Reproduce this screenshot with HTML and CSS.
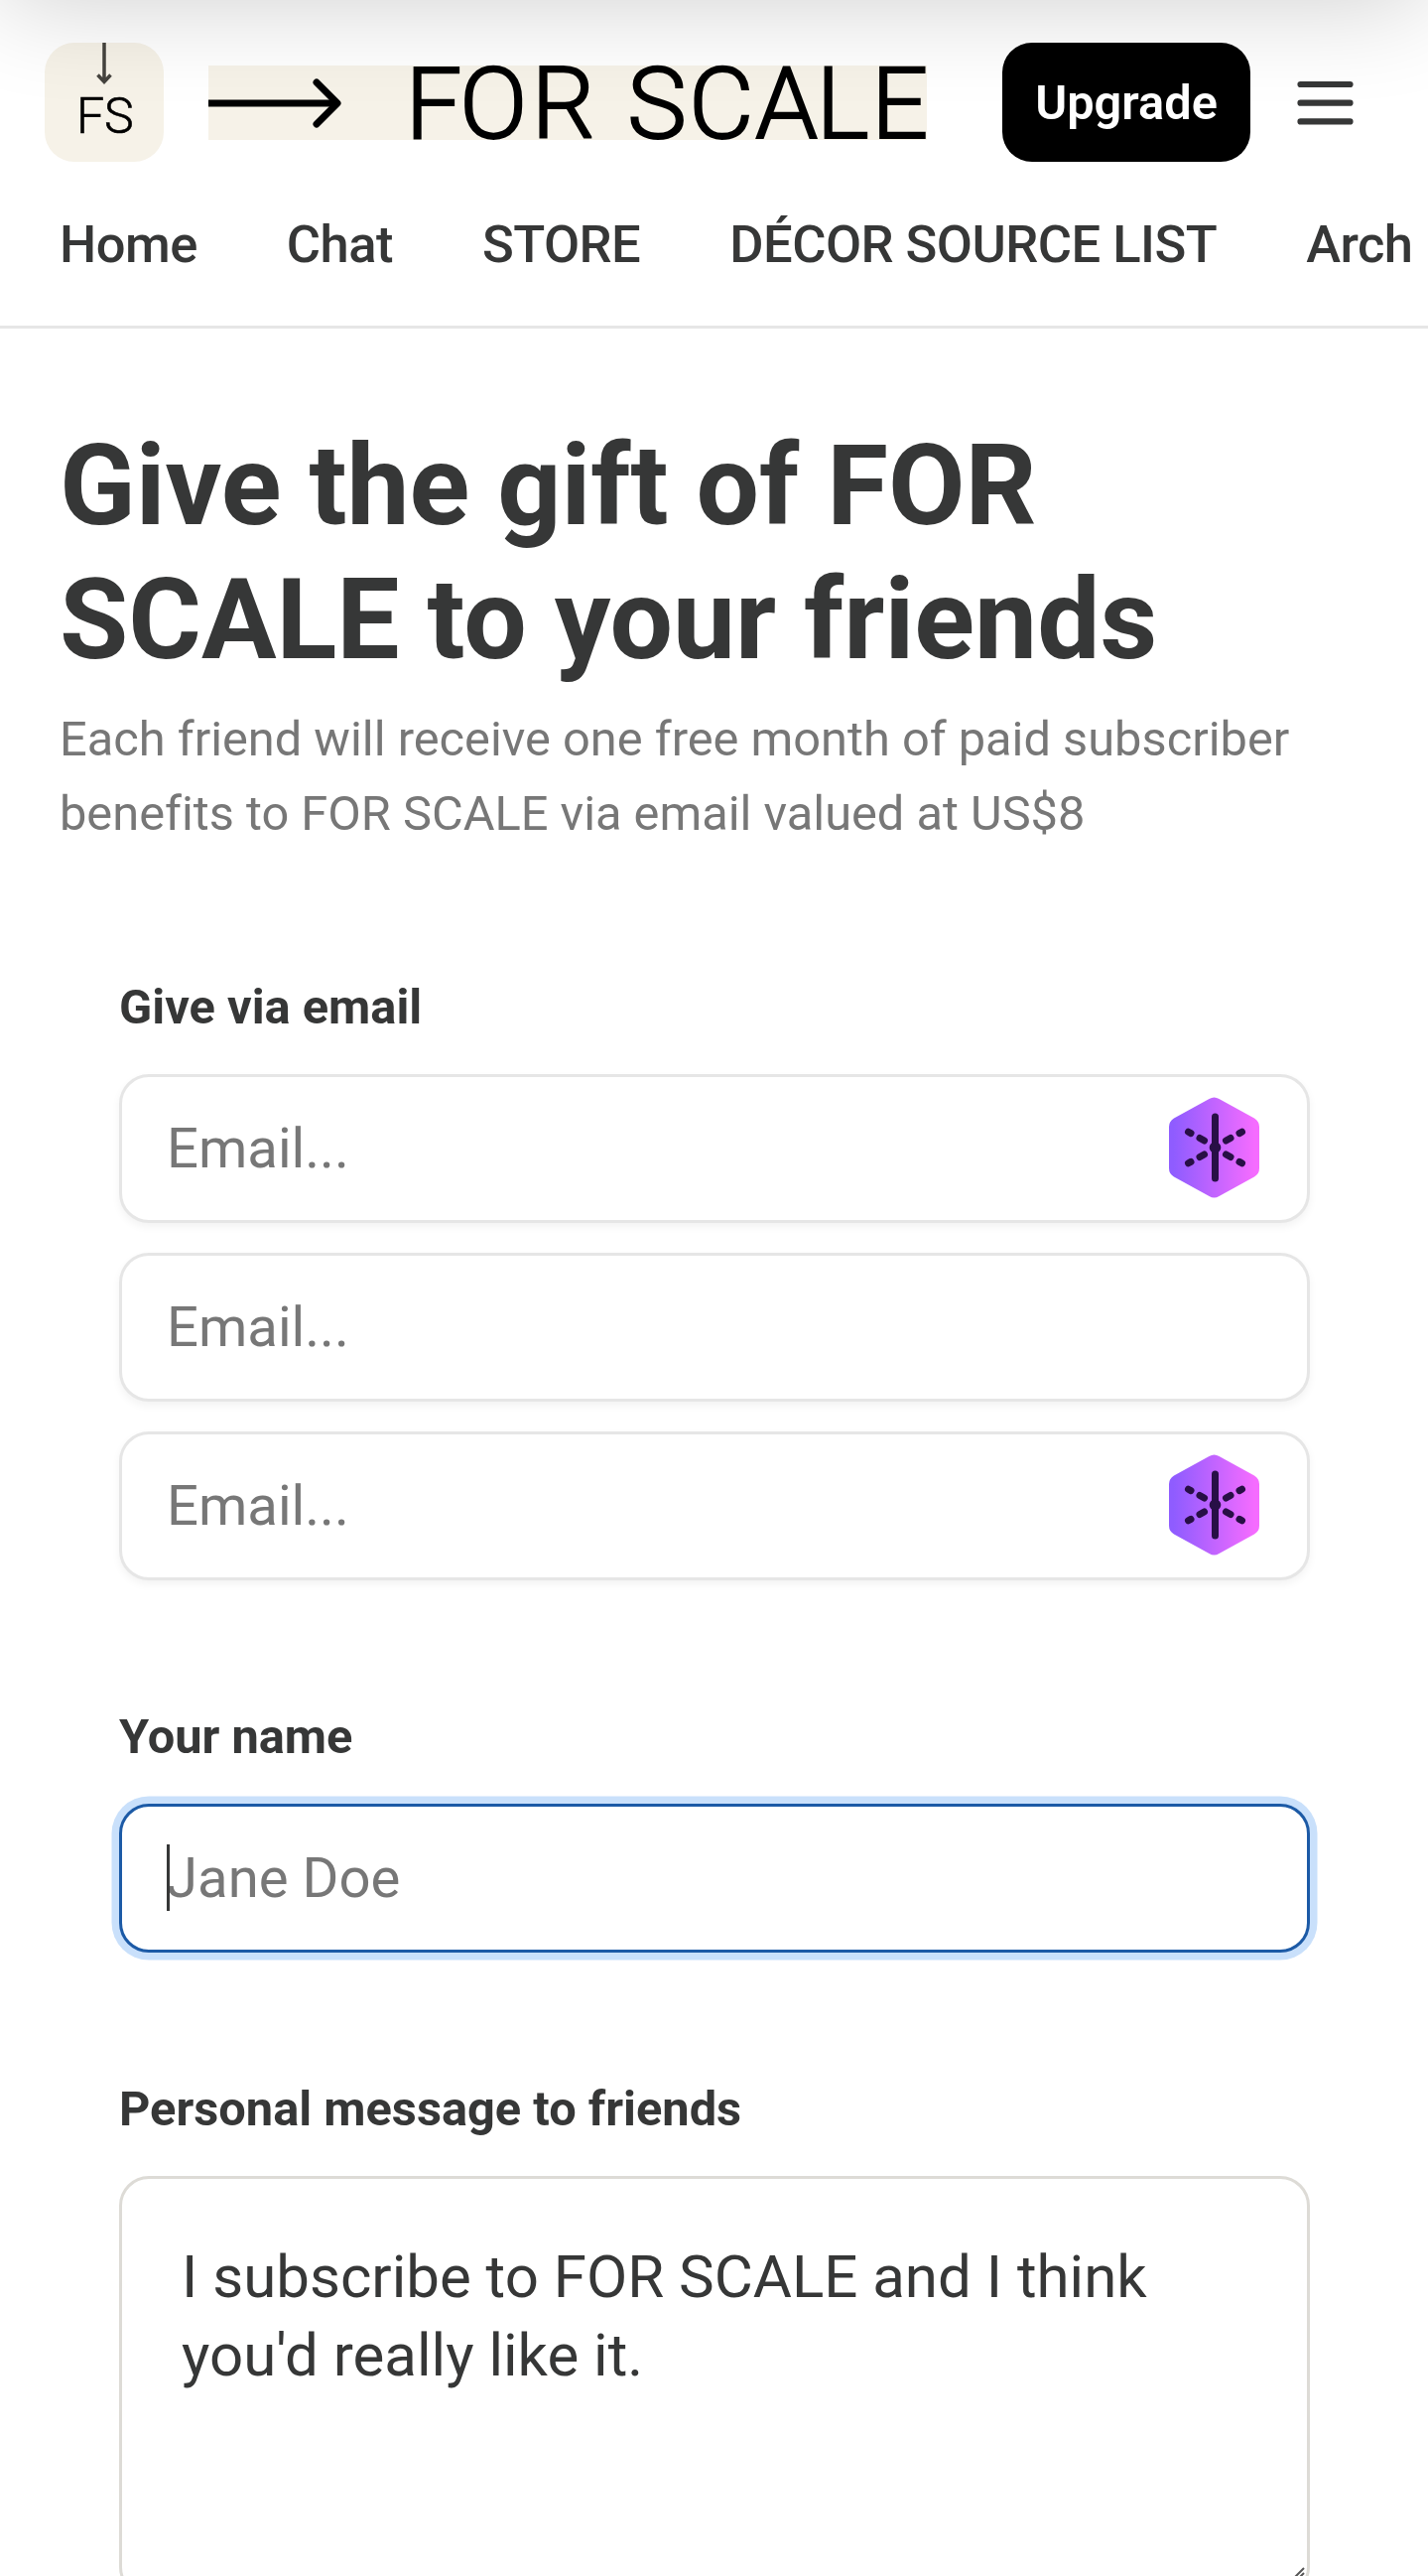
FILE: index.html
```html
<!doctype html>
<html lang="en">
  <head>
    <meta charset="UTF-8" />
    <meta name="viewport" content="width=device-width, initial-scale=1.0" />
    <title>Give the gift of FOR SCALE</title>
    <link rel="stylesheet" href="styles.css">
  </head>
  <body>
    <div class="top-shadow"></div>

    <header class="header">
      <div class="topbar">
        <a href="#" class="avatar">
          <svg viewBox="0 0 120 120" width="120" height="120">
            <rect width="120" height="120" fill="#f6f2e8" />
            <path d="M60 0V39M53.5 32.5L60 39.5L66.5 32.5" fill="none" stroke="#45433e" stroke-width="3.5" />
            <text class="logo-text small" y="91" x="32 60" font-size="50">FS</text>
          </svg>
        </a>
        <a href="#" class="wordmark">
          <svg viewBox="0 0 724 75" width="724" height="75">
            <rect width="724" height="75" fill="#f6f2e8" />
            <path d="M0 38H131" fill="none" stroke="#000" stroke-width="7" />
            <path d="M109 17L130 38L109 59" fill="none" stroke="#000" stroke-width="7" stroke-linecap="round" stroke-linejoin="round" />
            <text class="logo-text" y="73" x="198.5 253 325.5 400 422 484 551 612.5 668" font-size="101">FOR SCALE</text>
          </svg>
        </a>
        <button class="upgrade">Upgrade</button>
        <button class="menu" aria-label="Menu">
          <svg viewBox="0 0 75 75" width="75" height="75">
            <path d="M12.5 19H62.5M12.5 37.7H62.5M12.5 56.4H62.5" stroke="#363737" stroke-width="6.2" stroke-linecap="round" />
          </svg>
        </button>
      </div>
      <nav class="nav">
        <a href="#">Home</a>
        <a href="#">Chat</a>
        <a href="#">STORE</a>
        <a href="#">DÉCOR SOURCE LIST</a>
        <a href="#">Arch</a>
      </nav>
    </header>

    <main class="content">
      <h1>Give the gift of FOR SCALE to your friends</h1>
      <p class="subtitle">Each friend will receive one free month of paid subscriber benefits to FOR SCALE via email valued at US$8</p>

      <form class="gift-form">
        <div class="group">
          <label>Give via email</label>
          <div class="emails">
            <div class="field">
              <span class="placeholder">Email...</span>
              <svg class="autofill" viewBox="0 0 92 102" width="92" height="102">
                <defs>
                  <linearGradient id="hex" x1="0" x2="1" y1="0" y2="0">
                    <stop offset="0.05" stop-color="#8f5cff" />
                    <stop offset="0.95" stop-color="#f56cff" />
                  </linearGradient>
                </defs>
                <path d="M40.5 2Q45.5-1 50.5 2L86 21.5Q91 24.5 91 30V72Q91 77.5 86 80.5L50.5 100Q45.5 103 40.5 100L5 80.5Q0 77.5 0 72V30Q0 24.5 5 21.5Z" fill="url(#hex)" />
                <g stroke="#280f46" stroke-width="7" stroke-linecap="round">
                  <path d="M46.5 20V82" />
                  <path d="M19.5 35.2L22 36.6M31 41.5L35.5 44M57.5 44L62 41.5M71 36.6L73.5 35.2M19.5 66.8L22 65.4M31 60.5L35.5 58M57.5 58L62 60.5M71 65.4L73.5 66.8" />
                </g>
                <circle cx="46.5" cy="51" r="5.8" fill="#280f46" />
              </svg>
            </div>
            <div class="field">
              <span class="placeholder">Email...</span>
            </div>
            <div class="field">
              <span class="placeholder">Email...</span>
              <svg class="autofill" viewBox="0 0 92 102" width="92" height="102">
                <path d="M40.5 2Q45.5-1 50.5 2L86 21.5Q91 24.5 91 30V72Q91 77.5 86 80.5L50.5 100Q45.5 103 40.5 100L5 80.5Q0 77.5 0 72V30Q0 24.5 5 21.5Z" fill="url(#hex)" />
                <g stroke="#280f46" stroke-width="7" stroke-linecap="round">
                  <path d="M46.5 20V82" />
                  <path d="M19.5 35.2L22 36.6M31 41.5L35.5 44M57.5 44L62 41.5M71 36.6L73.5 35.2M19.5 66.8L22 65.4M31 60.5L35.5 58M57.5 58L62 60.5M71 65.4L73.5 66.8" />
                </g>
                <circle cx="46.5" cy="51" r="5.8" fill="#280f46" />
              </svg>
            </div>
          </div>
        </div>

        <div class="group">
          <label>Your name</label>
          <div class="field focused">
            <span class="caret"></span>
            <span class="placeholder">Jane Doe</span>
          </div>
        </div>

        <div class="group">
          <label>Personal message to friends</label>
          <div class="message">
            I subscribe to FOR SCALE and I think you'd really like it.
            <svg class="resizer" viewBox="0 0 30 30" width="30" height="30">
              <path d="M3 28L27 4M8 28L27 9" stroke="#555" stroke-width="2" />
            </svg>
          </div>
        </div>
      </form>
    </main>
  </body>
</html>
```

FILE: styles.css
```css
* {
  box-sizing: border-box;
}

html {
  overflow: hidden;
}

body {
  margin: 0;
  height: 2595px;
  overflow: hidden;
  position: relative;
  background-color: #fff;
  color: #363737;
  font-family: Roboto, "Liberation Sans", sans-serif;
  font-variant-ligatures: none;
}

a {
  color: inherit;
  text-decoration: none;
}

button {
  border: none;
  padding: 0;
  font-family: inherit;
}

/* soft shade under the browser bar, lies over the header */
.top-shadow {
  position: absolute;
  top: -200px;
  left: 0;
  width: 100%;
  height: 200px;
  box-shadow: 0 0 105px rgba(0, 0, 0, 0.2);
  pointer-events: none;
  z-index: 10;
}

.header {
  height: 331px;
  padding-top: 43px;
  border-bottom: 3px solid #e6e6e6;
}

.topbar {
  display: flex;
  align-items: center;
  height: 120px;
  padding-left: 45px;
}

.avatar {
  width: 120px;
  height: 120px;
  border-radius: 30px;
  overflow: hidden;
  margin-right: 45px;
}

.avatar svg,
.wordmark svg,
.menu svg {
  display: block;
}

.wordmark svg {
  overflow: visible;
}

.logo-text {
  font-family: Roboto, "Liberation Sans", sans-serif;
  font-weight: 300;
  fill: #000;
  stroke: #000;
  stroke-width: 2px;
}

.logo-text.small {
  stroke-width: 0.6px;
}

.wordmark {
  width: 724px;
  margin-right: 76px;
}

.upgrade {
  width: 250px;
  height: 120px;
  border-radius: 30px;
  background-color: #000;
  color: #fff;
  font-size: 48.75px;
  font-weight: 600;
}

.menu {
  margin-left: 38px;
  background: none;
}

.nav {
  display: flex;
  gap: 90px;
  padding: 46px 0 0 60px;
  font-size: 52.5px;
  font-weight: 500;
  letter-spacing: -0.01em;
  line-height: 75px;
  white-space: nowrap;
}

.content {
  padding: 91px 59px 0 60px;
}

h1 {
  margin: 0 0 15px;
  font-size: 112.5px;
  font-weight: 700;
  line-height: 135px;
}

.subtitle {
  margin: 0;
  font-size: 48.75px;
  line-height: 75px;
  color: #777;
}

.gift-form {
  display: flex;
  flex-direction: column;
  gap: 120px;
  padding: 120px 60px 0;
}

.group {
  display: flex;
  flex-direction: column;
  gap: 30px;
}

label {
  font-size: 48.75px;
  font-weight: 700;
  line-height: 75px;
}

.emails {
  display: flex;
  flex-direction: column;
  gap: 30px;
}

.field {
  display: flex;
  align-items: center;
  height: 150px;
  padding: 0 47px 0 45px;
  border: 3px solid #e6e6e6;
  border-radius: 30px;
  background-color: #fff;
  box-shadow: 0 4px 8px rgba(0, 0, 0, 0.05);
}

.field.focused {
  position: relative;
  border-color: #1c5aa6;
  box-shadow: 0 0 0 7.5px #c9e0fb;
}

.placeholder {
  flex: 1;
  font-size: 56.25px;
  color: #777;
}

.autofill {
  margin-bottom: 2px;
}

.caret {
  position: absolute;
  left: 45px;
  top: 38px;
  width: 3px;
  height: 67px;
  background-color: #363737;
}

.message {
  position: relative;
  height: 424px;
  padding: 60px;
  border: 3px solid #dddbd6;
  border-radius: 30px;
  font-size: 60px;
  line-height: 78.75px;
}

.resizer {
  position: absolute;
  right: 0;
  bottom: 0;
}
```
